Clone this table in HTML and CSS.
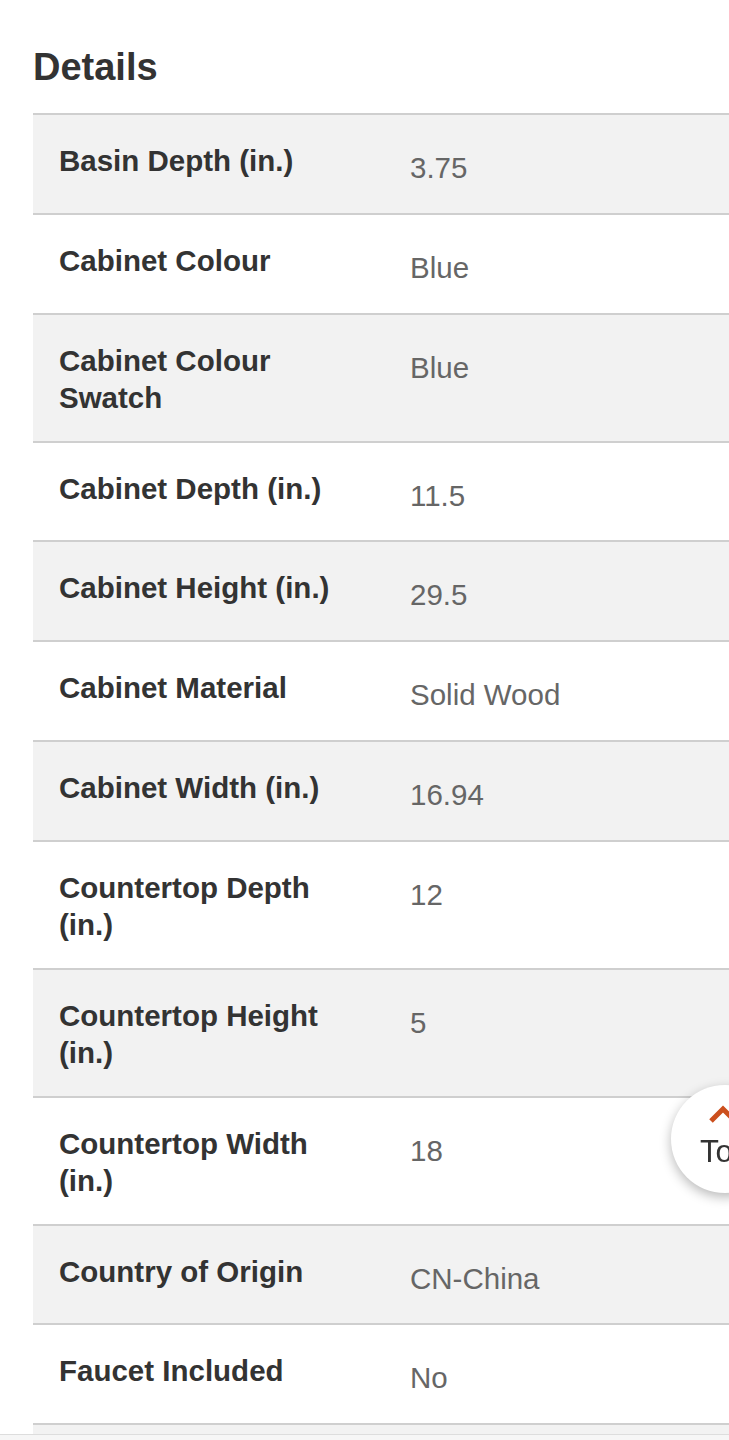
FILE: index.html
```html
<!DOCTYPE html>
<html lang="en">
<head>
<meta charset="utf-8">
<title>Details</title>
<link rel="stylesheet" href="styles.css">
</head>
<body>
<main class="page">
  <h2 class="title">Details</h2>
  <div class="specs">
    <div class="row alt"><div class="label">Basin Depth (in.)</div><div class="value">3.75</div></div>
    <div class="row"><div class="label">Cabinet Colour</div><div class="value">Blue</div></div>
    <div class="row alt"><div class="label">Cabinet Colour Swatch</div><div class="value">Blue</div></div>
    <div class="row"><div class="label">Cabinet Depth (in.)</div><div class="value">11.5</div></div>
    <div class="row alt"><div class="label">Cabinet Height (in.)</div><div class="value">29.5</div></div>
    <div class="row"><div class="label">Cabinet Material</div><div class="value">Solid Wood</div></div>
    <div class="row alt"><div class="label">Cabinet Width (in.)</div><div class="value">16.94</div></div>
    <div class="row"><div class="label">Countertop Depth (in.)</div><div class="value">12</div></div>
    <div class="row alt"><div class="label">Countertop Height (in.)</div><div class="value">5</div></div>
    <div class="row"><div class="label">Countertop Width (in.)</div><div class="value">18</div></div>
    <div class="row alt"><div class="label">Country of Origin</div><div class="value">CN-China</div></div>
    <div class="row"><div class="label">Faucet Included</div><div class="value">No</div></div>
    <div class="row alt"><div class="label">&nbsp;</div><div class="value">&nbsp;</div></div>
  </div>
</main>
<a class="to-top" href="#">
  <svg class="chev" width="30" height="20" viewBox="0 0 30 20" aria-hidden="true">
    <path d="M3 17 L15 5 L27 17" fill="none" stroke="#cc4f1d" stroke-width="5" stroke-linecap="butt" stroke-linejoin="miter"/>
  </svg>
  <span class="top-text">Top</span>
</a>
<div class="bottom-bar"></div>
</body>
</html>
```
FILE: styles.css
```css
html, body {
  margin: 0;
  padding: 0;
  background: #ffffff;
  overflow: hidden;
}

body {
  font-family: "Liberation Sans", Arial, Helvetica, sans-serif;
  color: #333333;
}

.page {
  padding: 44px 0 0 33px;
}

.title {
  margin: 0 0 23px 0;
  font-size: 38px;
  line-height: 46px;
  font-weight: bold;
  color: #333333;
}

.specs {
  display: flex;
  flex-direction: column;
}

.row {
  display: grid;
  grid-template-columns: 377px 1fr;
  align-items: start;
  border-top: 2px solid #cfcfcf;
  background: #ffffff;
}

.row.alt {
  background: #f2f2f2;
}

.label {
  padding: 27px 58px 25px 26px;
  font-size: 29.5px;
  line-height: 37px;
  font-weight: bold;
  color: #333333;
}

.value {
  padding: 34px 0 26.75px 0;
  font-size: 29.5px;
  line-height: 37px;
  color: #666666;
}

.to-top {
  position: fixed;
  left: 671px;
  top: 1085px;
  width: 108px;
  height: 108px;
  border-radius: 50%;
  background: #ffffff;
  box-shadow: 0 4px 12px rgba(0, 0, 0, 0.28);
  display: flex;
  flex-direction: column;
  align-items: center;
  text-decoration: none;
  color: #333333;
}

.chev {
  margin-top: 19px;
  margin-left: -4px;
  display: block;
}

.top-text {
  margin-top: 10px;
  font-size: 31px;
  line-height: 36px;
  color: #333333;
}

.bottom-bar {
  position: fixed;
  left: 0;
  right: 0;
  bottom: 0;
  height: 5px;
  background: #f6f6f6;
  border-top: 1px solid #dddddd;
}
```
